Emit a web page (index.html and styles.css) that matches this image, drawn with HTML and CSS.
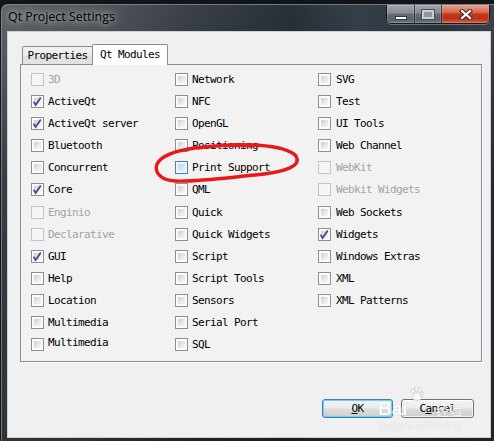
FILE: index.html
```html
<!DOCTYPE html>
<html>
<head>
<meta charset="utf-8">
<title>Qt Project Settings</title>
<link rel="stylesheet" href="styles.css">
</head>
<body>
<div class="window">
  <div class="titlebar">
    <span class="title">Qt Project Settings</span>
    <div class="caption">
      <div class="cbtn min"><span class="min-icon"></span></div>
      <div class="cbtn max"><span class="max-icon"></span></div>
      <div class="cbtn close">
        <svg width="14" height="11" viewBox="0 0 14 11"><path d="M3 2 L11 9 M11 2 L3 9" stroke="#3a2a28" stroke-width="4.2" stroke-linecap="square"/><path d="M3 2 L11 9 M11 2 L3 9" stroke="#fff" stroke-width="2.2" stroke-linecap="square"/></svg>
      </div>
    </div>
  </div>
  <div class="client">
    <div class="tabs">
      <div class="tab">Properties</div>
      <div class="tab active">Qt Modules</div>
    </div>
    <div class="pane">
      <div class="modules">
        <label class="item disabled"><span class="cb off"></span>3D</label>
        <label class="item"><span class="cb"><svg viewBox="0 0 13 13"><path d="M2.6 6.6 L4.6 10 L9.8 2.6" fill="none" stroke="#3b4d8c" stroke-width="1.8"/></svg></span>ActiveQt</label>
        <label class="item"><span class="cb"><svg viewBox="0 0 13 13"><path d="M2.6 6.6 L4.6 10 L9.8 2.6" fill="none" stroke="#3b4d8c" stroke-width="1.8"/></svg></span>ActiveQt server</label>
        <label class="item"><span class="cb"></span>Bluetooth</label>
        <label class="item"><span class="cb"></span>Concurrent</label>
        <label class="item"><span class="cb"><svg viewBox="0 0 13 13"><path d="M2.6 6.6 L4.6 10 L9.8 2.6" fill="none" stroke="#3b4d8c" stroke-width="1.8"/></svg></span>Core</label>
        <label class="item disabled"><span class="cb off"></span>Enginio</label>
        <label class="item disabled"><span class="cb off"></span>Declarative</label>
        <label class="item"><span class="cb"><svg viewBox="0 0 13 13"><path d="M2.6 6.6 L4.6 10 L9.8 2.6" fill="none" stroke="#3b4d8c" stroke-width="1.8"/></svg></span>GUI</label>
        <label class="item"><span class="cb"></span>Help</label>
        <label class="item"><span class="cb"></span>Location</label>
        <label class="item"><span class="cb"></span>Multimedia</label>
        <label class="item"><span class="cb"></span><span class="raised">Multimedia</span></label>

        <label class="item"><span class="cb"></span>Network</label>
        <label class="item"><span class="cb"></span>NFC</label>
        <label class="item"><span class="cb"></span>OpenGL</label>
        <label class="item"><span class="cb"></span>Positioning</label>
        <label class="item"><span class="cb hot"></span>Print Support</label>
        <label class="item"><span class="cb"></span>QML</label>
        <label class="item"><span class="cb"></span>Quick</label>
        <label class="item"><span class="cb"></span>Quick Widgets</label>
        <label class="item"><span class="cb"></span>Script</label>
        <label class="item"><span class="cb"></span>Script Tools</label>
        <label class="item"><span class="cb"></span>Sensors</label>
        <label class="item"><span class="cb"></span>Serial Port</label>
        <label class="item"><span class="cb"></span>SQL</label>

        <label class="item c3"><span class="cb"></span>SVG</label>
        <label class="item c3"><span class="cb"></span>Test</label>
        <label class="item c3"><span class="cb"></span>UI Tools</label>
        <label class="item c3"><span class="cb"></span>Web Channel</label>
        <label class="item c3 disabled"><span class="cb off"></span>WebKit</label>
        <label class="item c3 disabled"><span class="cb off"></span>Webkit Widgets</label>
        <label class="item c3"><span class="cb"></span>Web Sockets</label>
        <label class="item c3"><span class="cb"><svg viewBox="0 0 13 13"><path d="M2.6 6.6 L4.6 10 L9.8 2.6" fill="none" stroke="#3b4d8c" stroke-width="1.8"/></svg></span>Widgets</label>
        <label class="item c3"><span class="cb"></span>Windows Extras</label>
        <label class="item c3"><span class="cb"></span>XML</label>
        <label class="item c3"><span class="cb"></span>XML Patterns</label>
      </div>
    </div>
    <div class="buttons">
      <button class="btn ok"><u>O</u>K</button>
      <button class="btn cancel">C<u>a</u>ncel</button>
    </div>
  </div>
</div>

<div class="watermark">
  <span class="wm-bai">Bai</span>
  <svg class="wm-paw" width="16" height="16" viewBox="0 0 16 16">
    <g fill="#fff" stroke="#c4c4c4" stroke-width="0.8">
      <ellipse cx="4" cy="5" rx="1.8" ry="2.3"/>
      <ellipse cx="7.5" cy="2.8" rx="1.8" ry="2.2"/>
      <ellipse cx="11.2" cy="4" rx="1.8" ry="2.2"/>
      <ellipse cx="13.3" cy="8" rx="1.6" ry="2"/>
      <path d="M8 7 C5 7 3 11 4 13 C5 15 11 15 12 13 C13 11 11 7 8 7 Z"/>
    </g>
  </svg>
  <span class="wm-jy">经验</span>
  <span class="wm-url">jingyan.baidu.com</span>
</div>

<svg class="annotation" width="494" height="441" viewBox="0 0 494 441">
  <path d="M198 148 C240 142, 285 144, 296 156 C302 166, 286 172, 255 175 C225 178, 196 182, 175 181 C160 180, 154 172, 157 164 C161 156, 173 151, 195 148 C215 145, 235 145, 252 146" fill="none" stroke="#e8191b" stroke-width="3.4" stroke-linecap="round" stroke-linejoin="round"/>
</svg>
</body>
</html>
```
FILE: styles.css
```css
* { box-sizing: border-box; }

html, body {
  margin: 0;
  padding: 0;
}

body {
  width: 494px;
  height: 441px;
  overflow: hidden;
  position: relative;
  background: #121518;
  font-family: "DejaVu Sans Mono", "Liberation Mono", monospace;
}

.window {
  margin: 4px -6px 0 1px;
  height: 440px;
  border: 1px solid rgba(175, 182, 190, 0.6);
  border-bottom: none;
  border-radius: 7px 7px 0 0;
  background:
    linear-gradient(180deg, rgba(0,0,0,0) 0px, rgba(0,0,0,0.05) 28px, rgba(8,12,16,0.45) 180px, rgba(8,12,16,0.55) 440px),
    linear-gradient(90deg, #5e6369 0%, #53585e 18%, #3a4047 38%, #2a3038 58%, #37404a 72%, #2c333b 88%, #3d444b 100%);
  display: flex;
  flex-direction: column;
}

.titlebar {
  height: 26px;
  flex: none;
  display: flex;
  align-items: flex-start;
  padding-left: 6px;
}

.title {
  flex: 1;
  font-family: "Open Sans", "Noto Sans", sans-serif;
  font-size: 12.4px;
  line-height: 18px;
  padding-top: 3px;
  color: #000;
  text-shadow: 0 0 6px rgba(255,255,255,0.75), 0 0 12px rgba(255,255,255,0.45);
}

.caption {
  display: flex;
  height: 19px;
  margin-right: 9px;
  border: 1px solid rgba(18, 22, 28, 0.85);
  border-top: none;
  border-radius: 0 0 5px 5px;
  overflow: hidden;
  box-shadow: 0 1px 0 rgba(220, 225, 230, 0.35);
}

.cbtn {
  height: 100%;
  display: flex;
  align-items: center;
  justify-content: center;
}

.min, .max {
  background: linear-gradient(180deg, #9ea4aa 0%, #858c93 45%, #646b72 50%, #5a6168 80%, #6d757c 100%);
  border-right: 1px solid rgba(25, 30, 36, 0.8);
  box-shadow: inset 0 0 0 1px rgba(255,255,255,0.18);
}

.min { width: 28px; }
.max { width: 27px; }

.close {
  width: 47px;
  background: linear-gradient(180deg, #e6a593 0%, #d66a52 40%, #c2391f 50%, #bb3118 75%, #d9603f 100%);
  box-shadow: inset 0 0 0 1px rgba(255,200,180,0.25);
}

.min-icon {
  width: 12px;
  height: 4px;
  margin-top: 7px;
  background: #fff;
  border: 1px solid #34383d;
}

.max-icon {
  width: 12px;
  height: 9px;
  border: 2px solid #c9cdd1;
  background: #8f969c;
  box-shadow: 0 0 0 1px #4b5157;
}

.client {
  position: relative;
  margin: 0 8px 0 5px;
  height: 407px;
  border: 1px solid #cdd1d5;
  background: #f0f0f0;
  padding: 12px 0 0 12px;
}

.tabs {
  display: flex;
  align-items: flex-end;
  height: 20px;
  padding-left: 2px;
  position: relative;
  z-index: 1;
}

.tab {
  width: 71px;
  height: 18px;
  border: 1px solid #898c95;
  border-bottom: none;
  border-radius: 2px 2px 0 0;
  background: linear-gradient(180deg, #f2f2f2 0%, #ebebeb 50%, #dfdfdf 51%, #e3e3e3 100%);
  text-align: center;
  font-size: 11px;
  letter-spacing: -0.62px;
  line-height: 17px;
  color: #000;
}

.tab.active {
  width: 76px;
  height: 21px;
  margin-left: -1px;
  margin-bottom: -1px;
  background: #fff;
  line-height: 19px;
}

.pane {
  width: 462px;
  height: 298px;
  border: 1px solid #898c95;
  background: #f2f2f2;
  box-shadow: 1px 1px 0 #fff;
  padding: 3px 0 0 10px;
}

.modules {
  display: grid;
  grid-template-columns: 144px 143px 1fr;
  grid-template-rows: repeat(13, 22.17px);
  grid-auto-flow: column;
}

.item {
  display: flex;
  align-items: center;
  gap: 4px;
  font-size: 11px;
  letter-spacing: -0.62px;
  color: #000;
  white-space: nowrap;
}

.item.c3 { gap: 5px; }

.item.disabled { color: #a3a3a3; }

.raised { margin-bottom: 5px; }

.cb {
  flex: none;
  position: relative;
  width: 13px;
  height: 13px;
  border: 1px solid #8e8f8f;
  padding: 2px;
  background: linear-gradient(135deg, #cdcdcd 0%, #e6e6e6 50%, #f7f7f7 100%) content-box, #fbfbfb;
}

.cb.off {
  border-color: #c4c4c4;
  background: #f5f5f5;
}

.cb.hot {
  border-color: #4f7fa8;
  background: linear-gradient(135deg, #b3dcf6 0%, #cbe8fa 50%, #e4f4fd 100%) content-box, #eaf6fd;
}

.cb svg {
  position: absolute;
  left: -1px;
  top: -1px;
  width: 13px;
  height: 13px;
}

.buttons {
  display: flex;
  justify-content: flex-end;
  gap: 8px;
  margin-top: 37px;
  padding-right: 16px;
}

.btn {
  height: 19px;
  padding: 0;
  border: 1px solid #707070;
  border-radius: 3px;
  background: linear-gradient(180deg, #f3f3f3 0%, #ececec 48%, #dddddd 52%, #cfcfcf 100%);
  box-shadow: inset 0 0 0 1px rgba(255,255,255,0.75);
  font-family: "DejaVu Sans Mono", "Liberation Mono", monospace;
  font-size: 11px;
  letter-spacing: -0.62px;
  color: #000;
  line-height: 16px;
}

.btn u { text-underline-offset: 1px; }

.btn.ok {
  width: 71px;
  border-color: #3c7fb1;
  box-shadow: inset 0 0 0 1px #6cd1fb;
}

.btn.cancel { width: 73px; }

.watermark {
  position: absolute;
  left: 376px;
  top: 380px;
  width: 100px;
  height: 52px;
  pointer-events: none;
  opacity: 0.85;
}

.wm-bai {
  position: absolute;
  left: 2px;
  top: 19px;
  font-family: "Liberation Sans", sans-serif;
  font-weight: bold;
  font-size: 19px;
  line-height: 20px;
  color: #fff;
  text-shadow: 0 0 1px rgba(160,160,160,0.8);
}

.wm-paw {
  position: absolute;
  left: 33px;
  top: 6px;
}

.wm-jy {
  position: absolute;
  left: 60px;
  top: 22px;
  font-family: "Noto Sans CJK SC", sans-serif;
  font-size: 13px;
  line-height: 15px;
  color: #fff;
  text-shadow: 0 0 1px rgba(160,160,160,0.8);
}

.wm-url {
  position: absolute;
  left: 4px;
  top: 40px;
  font-family: "Liberation Sans", sans-serif;
  font-size: 10px;
  line-height: 11px;
  color: #fff;
  text-shadow: 0 0 1px rgba(160,160,160,0.7);
}

.annotation {
  position: absolute;
  left: 0;
  top: 0;
  pointer-events: none;
}
```
